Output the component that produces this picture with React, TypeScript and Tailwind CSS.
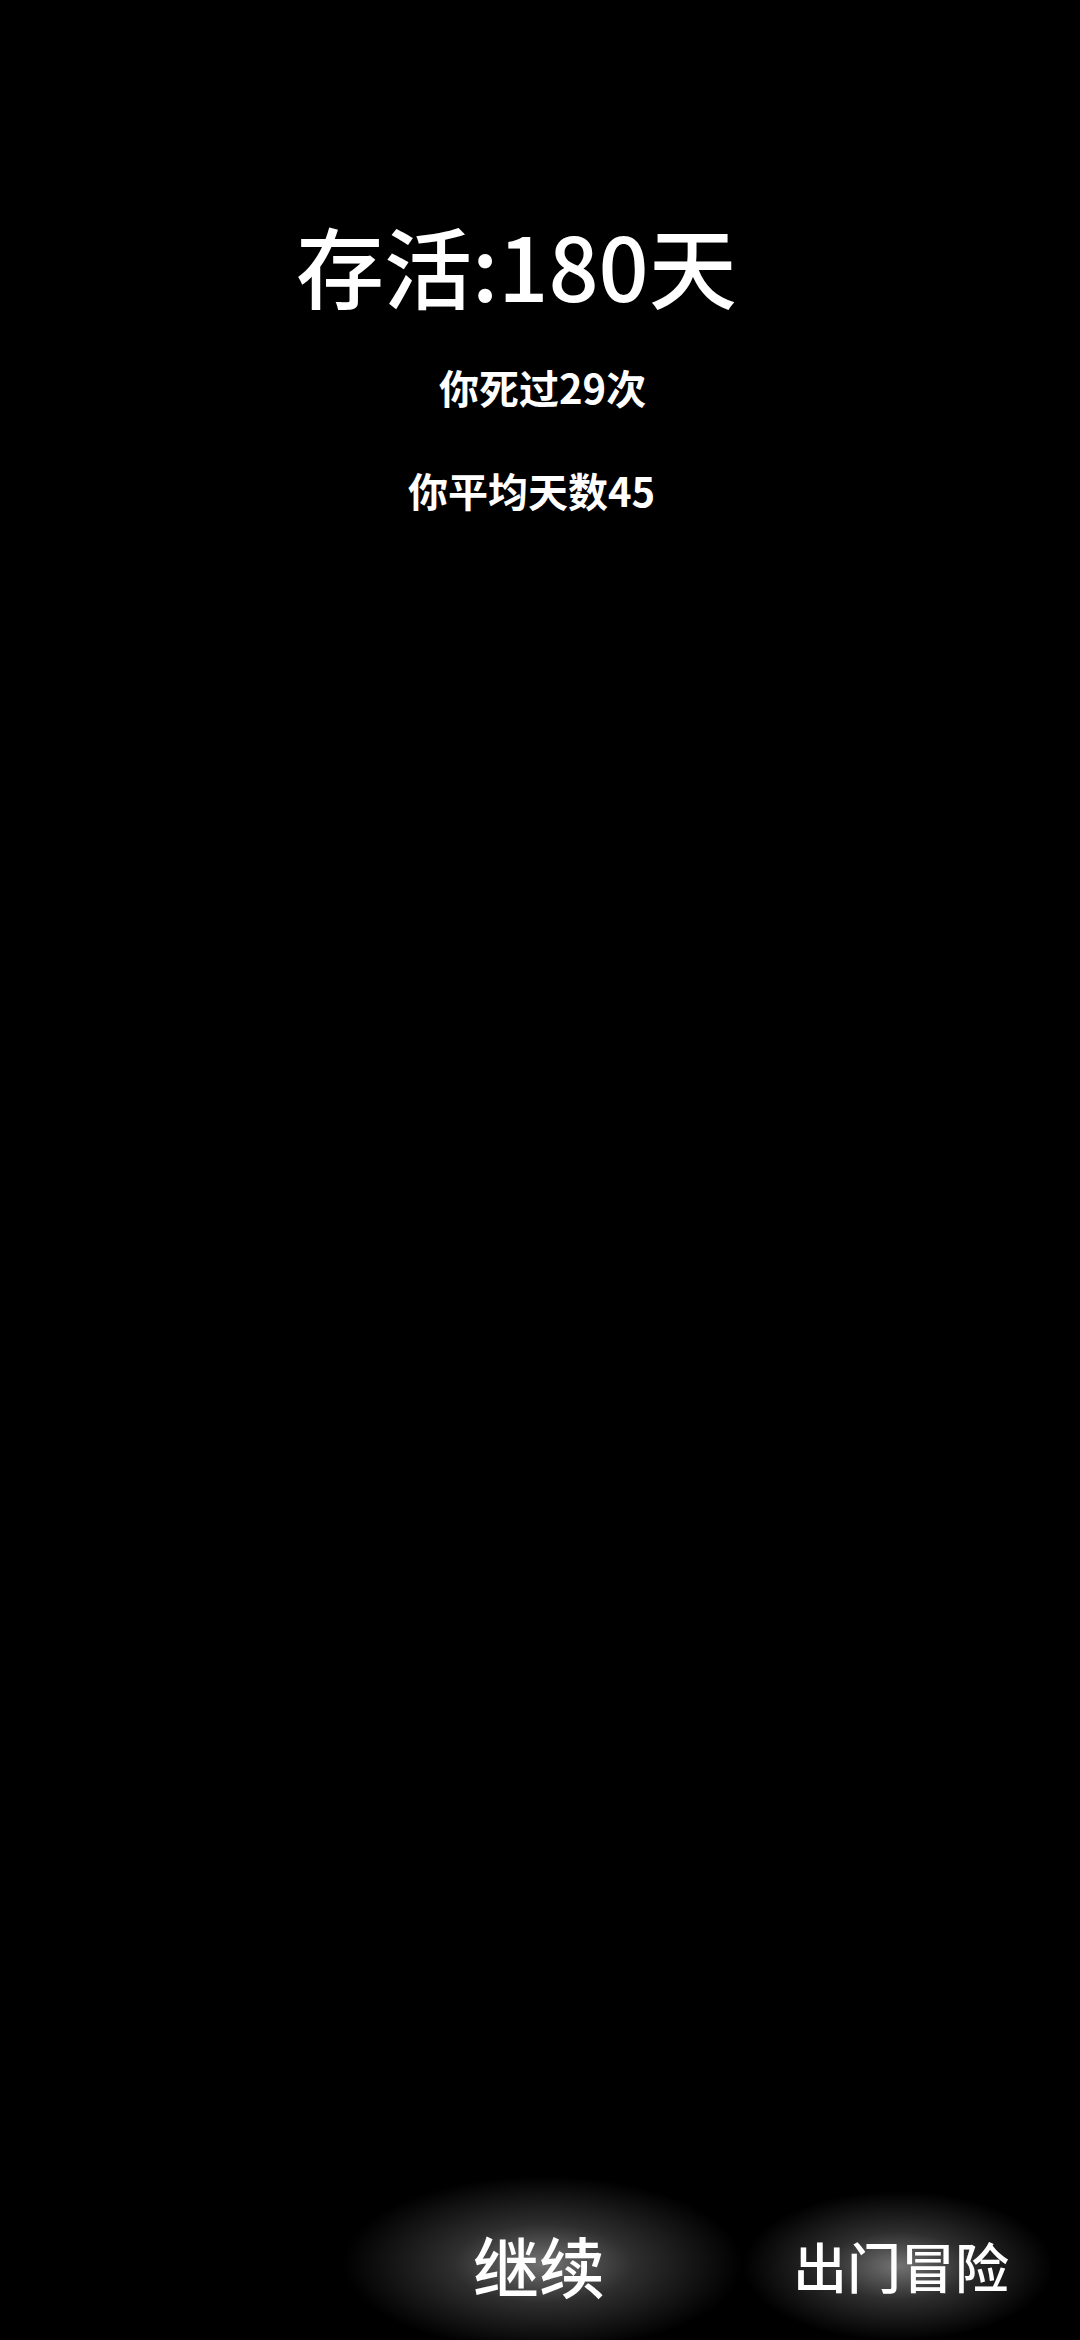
import React from 'react';

const font = { fontFamily: '"Noto Sans CJK SC", "Noto Sans", sans-serif' };

const GlowButton: React.FC<{ label: string; className: string; glow: string }> = ({ label, className, glow }) => (
  <button className={`relative whitespace-nowrap text-white leading-none ${className}`}>
    <span className={`pointer-events-none absolute ${glow} bg-[radial-gradient(ellipse_closest-side_at_center,rgba(255,255,255,0.45)_0%,rgba(255,255,255,0.18)_45%,rgba(255,255,255,0)_100%)]`} />
    <span className="relative">{label}</span>
  </button>
);

export default function App() {
  return (
    <div className="w-[1080px] h-[2340px] bg-black text-white flex flex-col overflow-hidden" style={font}>
      <div className="flex flex-col items-start pt-[220px]">
        <h1 className="ml-[296px] text-[88px] leading-none font-medium whitespace-nowrap">存活:180天</h1>
        <p className="ml-[439px] mt-[59px] text-[40px] leading-none font-semibold whitespace-nowrap">你死过29次</p>
        <p className="ml-[408px] mt-[63px] text-[40px] leading-none font-semibold whitespace-nowrap">你平均天数45</p>
      </div>

      <div className="flex-1" />

      <div className="flex items-start pb-[43px]">
        <GlowButton
          label="继续"
          className="ml-[473px] text-[66px] font-medium"
          glow="left-[-130px] top-[-55px] w-[400px] h-[175px]"
        />
        <GlowButton
          label="出门冒险"
          className="ml-[188px] mt-[8px] text-[54px] font-medium"
          glow="left-[-50px] top-[-48px] w-[310px] h-[150px]"
        />
      </div>
    </div>
  );
}
